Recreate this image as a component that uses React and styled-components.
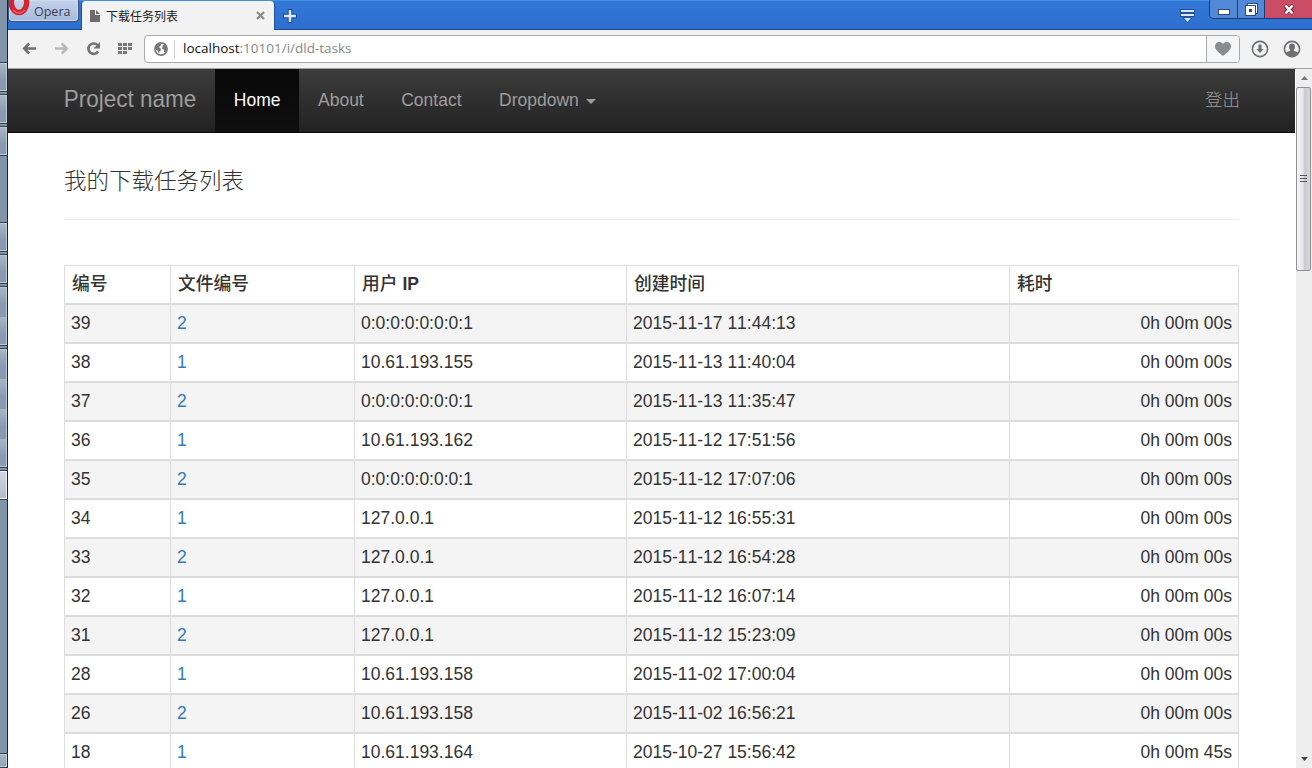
import React from "react";
import styled, { createGlobalStyle, css } from "styled-components";

const Global = createGlobalStyle`
  * { box-sizing: border-box; }
  body { margin: 0; background: #fff; overflow: hidden; font-family: "Liberation Sans", "Noto Sans CJK SC", sans-serif; font-size: 17.5px; color: #333; font-kerning: none; }
`;

const Desktop = styled.div`
  display: flex;
  width: 1312px;
  height: 768px;
  overflow: hidden;
`;
const Strip = styled.div`
  flex: none;
  width: 8px;
  background: #8294aa;
  border-right: 1px solid #20242a;
  display: flex;
  flex-direction: column;
`;
const TaskSlot = styled.div`
  flex: none;
  height: ${(p) => p.$h}px;
  ${(p) =>
    p.$kind === "button" &&
    css`
      background: linear-gradient(#a9b6c5, #8899b0 60%) 0 0 / 100% 30px;
      border: solid #36424f;
      border-width: 1px 0;
      box-shadow: inset -1px 1px #bdc9d5, inset 0 -1px #bdc9d5;
    `}
  ${(p) =>
    p.$kind === "active" &&
    css`
      background: linear-gradient(#d3d8df, #b2bdca);
      border: solid #36424f;
      border-width: 1px 0;
      box-shadow: inset -1px 1px #eef1f4, inset 0 -1px #eef1f4;
    `}
`;
const Browser = styled.div`
  flex: 1;
  min-width: 0;
  display: flex;
  flex-direction: column;
`;
const TabBar = styled.div`
  flex: none;
  height: 30px;
  display: flex;
  background: linear-gradient(#3276d6, #2c6fcf);
  border-top: 1px solid #3f92e0;
  box-shadow: inset 0 -1px #1d4b92;
`;
const OperaButton = styled.div`
  width: 71px;
  height: 22px;
  margin-top: -1px;
  display: flex;
  background: linear-gradient(#c5d3ec, #a7b9db);
  border: 1px solid #38527e;
  border-top: 0;
  border-radius: 0 0 4px 4px;
  box-shadow: inset 0 0 0 1px #cedbef;
  font: 12.5px/23px "Open Sans", sans-serif;
  color: #39424f;
  overflow: hidden;
`;
const OperaMark = styled.svg`
  width: 25px;
  height: 20px;
  flex: none;
`;
const Tab = styled.div`
  width: 194px;
  margin-left: 2px;
  padding: 0 9px 0 8px;
  display: flex;
  align-items: center;
  gap: 6px;
  background: #f2f2f2;
  border: 1px solid #1f5099;
  border-width: 0 1px;
  border-radius: 4px 4px 0 0;
  font: 12px/28px "Noto Sans CJK SC", sans-serif;
  color: #222;
`;
const TabTitle = styled.span`
  flex: 1;
`;
const Icon = styled.svg`
  display: block;
  flex: none;
`;
const NewTab = styled.div`
  padding: 8px 0 0 8px;
  flex: 1;
`;
const TabMenu = styled.div`
  padding: 8px 14px 0 0;
`;
const WindowButtons = styled.div`
  display: flex;
  height: 19px;
  margin-top: -1px;
  border: 1px solid #1d3b70;
  border-width: 0 0 1px 1px;
  border-radius: 0 0 0 5px;
  overflow: hidden;
`;
const WindowButton = styled.div`
  width: ${(p) => p.$w}px;
  padding-top: ${(p) => p.$drop || 0}px;
  display: flex;
  align-items: center;
  justify-content: center;
  background: ${(p) => (p.$close ? "#cb4c65" : "#5388d6")};
  border-left: ${(p) => (p.$first ? 0 : 1)}px solid #1d3b70;
`;
const Toolbar = styled.div`
  flex: none;
  height: 39px;
  display: flex;
  align-items: center;
  padding: 0 11px 1px 14px;
  background: #f2f2f2;
  border-bottom: 1px solid #a3a3a3;
`;
const NavIcons = styled.div`
  display: flex;
  align-items: center;
  width: 122px;
  gap: 17px;
`;
const Address = styled.div`
  flex: 1;
  height: 28px;
  display: flex;
  align-items: center;
  background: #fff;
  border: 1px solid #aaa;
  border-radius: 4px;
  padding-left: 9px;
  overflow: hidden;
`;
const Url = styled.div`
  flex: 1;
  height: 18px;
  margin-left: 6px;
  padding-left: 8px;
  border-left: 1px solid #ccc;
  font: 13.5px/17px "Open Sans", sans-serif;
  color: #888;
`;
const Host = styled.span`
  color: #111;
`;
const HeartButton = styled.div`
  width: 33px;
  height: 26px;
  display: flex;
  align-items: center;
  justify-content: center;
  background: #f5f6f8;
  border-left: 1px solid #aaa;
`;
const ToolIcons = styled.div`
  display: flex;
  gap: 14px;
  margin-left: 11px;
`;
const Viewport = styled.div`
  flex: 1;
  min-height: 0;
  display: flex;
`;
const Page = styled.div`
  flex: 1;
  min-width: 0;
  overflow: hidden;
`;
const Navbar = styled.nav`
  height: 64px;
  display: flex;
  padding: 0 55px 0 37px;
  background: linear-gradient(#3c3c3c, #222);
  border-bottom: 1px solid #080808;
  color: #9d9d9d;
`;
const Brand = styled.div`
  padding: 0 18.75px;
  font-size: 22.5px;
  line-height: 62px;
  transform: scaleY(1.04);
`;
const NavItem = styled.div`
  padding: 0 18.75px;
  line-height: 62px;
  ${(p) =>
    p.$active &&
    css`
      color: #fff;
      background: linear-gradient(#080808, #0f0f0f);
    `}
`;
const Caret = styled.span`
  display: inline-block;
  margin-left: 7px;
  vertical-align: middle;
  border: 5px solid transparent;
  border-top-color: currentColor;
  border-bottom: 0;
`;
const Logout = styled.div`
  margin-left: auto;
  font-weight: 300;
  line-height: 62px;
`;
const Content = styled.main`
  padding: 0 56px;
`;
const Heading = styled.h1`
  margin: 0 0 45px;
  padding-top: 32px;
  height: 87px;
  border-bottom: 1px solid #eee;
  font-size: 22.5px;
  line-height: 34px;
  font-weight: 300;
`;
const Table = styled.div`
  border: 1px solid #ddd;
  border-bottom: 0;
`;
const Row = styled.div`
  display: grid;
  grid-template-columns: 106px 184px 272px 383px 1fr;
  height: 39px;
  line-height: 36px;
  border-bottom: 2px solid #ddd;
  background: ${(p) => (p.$odd ? "#f4f4f4" : "#fff")};
`;
const Cell = styled.div`
  padding: 0 6px;
  border-right: 1px solid #ddd;
  text-align: ${(p) => (p.$right ? "right" : "left")};
  color: ${(p) => (p.$link ? "#337ab7" : "inherit")};
  &:last-child { border-right: 0; }
`;
const HeadCell = styled(Cell)`
  padding-left: 7px;
  font-size: 17.75px;
  font-weight: 500;
`;
const Latin = styled.b`
  font-size: 17.5px;
  font-weight: 700;
`;
const Scrollbar = styled.div`
  flex: none;
  width: 17px;
  display: flex;
  flex-direction: column;
  background: #eee;
  border-left: 1px solid #fff;
`;
const ScrollArrow = styled.div`
  height: 18px;
  display: flex;
  align-items: center;
  justify-content: center;
`;
const Thumb = styled.div`
  width: 15px;
  height: 184px;
  display: flex;
  align-items: center;
  justify-content: center;
  border: 1px solid #929292;
  border-radius: 2px;
  background: linear-gradient(90deg, #f4f4f4, #e8e8ea 45%, #c9c9cd 60%, #d9d9dc);
`;
const Space = styled.div`
  flex: 1;
`;

const slots = [
  [62], [30, "button"], [2], [30, "button"], [2], [30, "button"], [66],
  [30, "button"], [2], [30, "button"], [2], [60, "button"], [2], [120, "button"],
  [2], [30, "active"], [253], [15, "button"],
];

const rows = [
  [39, 2, "0:0:0:0:0:0:0:1", "2015-11-17 11:44:13", "0h 00m 00s"],
  [38, 1, "10.61.193.155", "2015-11-13 11:40:04", "0h 00m 00s"],
  [37, 2, "0:0:0:0:0:0:0:1", "2015-11-13 11:35:47", "0h 00m 00s"],
  [36, 1, "10.61.193.162", "2015-11-12 17:51:56", "0h 00m 00s"],
  [35, 2, "0:0:0:0:0:0:0:1", "2015-11-12 17:07:06", "0h 00m 00s"],
  [34, 1, "127.0.0.1", "2015-11-12 16:55:31", "0h 00m 00s"],
  [33, 2, "127.0.0.1", "2015-11-12 16:54:28", "0h 00m 00s"],
  [32, 1, "127.0.0.1", "2015-11-12 16:07:14", "0h 00m 00s"],
  [31, 2, "127.0.0.1", "2015-11-12 15:23:09", "0h 00m 00s"],
  [28, 1, "10.61.193.158", "2015-11-02 17:00:04", "0h 00m 00s"],
  [26, 2, "10.61.193.158", "2015-11-02 16:56:21", "0h 00m 00s"],
  [18, 1, "10.61.193.164", "2015-10-27 15:56:42", "0h 00m 45s"],
];

function ArrowIcon({ color, flip }) {
  return (
    <Icon width="15" height="13" viewBox="0 0 15 13">
      <path transform={flip ? "translate(15 0) scale(-1 1)" : undefined} d="M7.2 1.5 2.2 6.5 7.2 11.5M2.5 6.5H14" fill="none" stroke={color} strokeWidth="2.500" />
    </Icon>
  );
}

export default function App() {
  return (
    <>
      <Global />
      <Desktop>
        <Strip>
          {slots.map(([h, kind], i) => <TaskSlot key={i} $h={h} $kind={kind} />)}
        </Strip>
        <Browser>
          <TabBar>
            <OperaButton>
              <OperaMark viewBox="0 0 25 20">
                <ellipse cx="10" cy="2.500" rx="7.700" ry="10" fill="none" stroke="#d42532" strokeWidth="5.500" />
                <path d="M4 10q6 6 12 0" fill="none" stroke="#f0636a" strokeWidth="1.500" />
              </OperaMark>
              Opera
            </OperaButton>
            <Tab>
              <Icon width="10" height="12" viewBox="0 0 10 12"><path d="M0 0h5v5h5v7H0zM6 0l4 4H6z" fill="#6c6c6c" /></Icon>
              <TabTitle>下载任务列表</TabTitle>
              <Icon width="9" height="9" viewBox="0 0 9 9"><path d="m1 1 7 7m0-7-7 7" stroke="#888" strokeWidth="2.2" /></Icon>
            </Tab>
            <NewTab>
              <Icon width="14" height="14" viewBox="0 0 14 14">
                <path d="M7 0v14M0 7h14" stroke="#1d4a94" strokeWidth="4.500" />
                <path d="M7 1v12M1 7h12" stroke="#dce9fb" strokeWidth="2.500" />
              </Icon>
            </NewTab>
            <TabMenu>
              <Icon width="15" height="14" viewBox="0 0 15 14">
                <path d="M0 0h15v4H0zM0 4h15v4H0zM2 8h11l-5.500 6z" fill="#1f54a3" />
                <path d="M1 1h13v2H1zM1 5h13v2H1zM4 9h7l-3.500 4z" fill="#dce9fb" />
              </Icon>
            </TabMenu>
            <WindowButtons>
              <WindowButton $w={27} $first $drop={5}>
                <Icon width="14" height="6" viewBox="0 0 14 6"><rect x="1.500" y=".5" width="11" height="5" fill="#fff" stroke="#28487e" /></Icon>
              </WindowButton>
              <WindowButton $w={27}>
                <Icon width="13" height="13" viewBox="0 0 13 13">
                  <path d="M2 0h11v11h-2v2H0V2h2z" fill="#28487e" />
                  <path d="M3 1h9v9h-1V2H3zM1 3h9v9H1zm3 3v3h3V6z" fill="#fff" fillRule="evenodd" />
                </Icon>
              </WindowButton>
              <WindowButton $w={48} $close>
                <Icon width="12" height="11" viewBox="0 0 12 11">
                  <path d="m2 1.500 8 8m0-8-8 8" stroke="#6b2639" strokeWidth="4" />
                  <path d="m2.500 1.500 7 8m0-8-7 8" stroke="#fff" strokeWidth="2.600" />
                </Icon>
              </WindowButton>
            </WindowButtons>
          </TabBar>
          <Toolbar>
            <NavIcons>
              <ArrowIcon color="#6f7173" />
              <ArrowIcon color="#b9b9b9" flip />
              <Icon width="15" height="14" viewBox="0 0 15 14">
                <path d="M11.500 3.200A5.200 5.200 0 1 0 12 9.500" fill="none" stroke="#707274" strokeWidth="2.600" />
                <path d="M14 0v6.500H7.500z" fill="#707274" />
              </Icon>
              <Icon width="15" height="12" viewBox="0 0 15 12">
                <path d="M0 0h4v3H0zM5 0h4v3H5zM10 0h4v3h-4zM0 4h4v3H0zM5 4h4v3H5zM10 4h4v3h-4zM0 8h4v3H0zM5 8h4v3H5z" fill="#777" />
              </Icon>
            </NavIcons>
            <Address>
              <Icon width="14" height="14" viewBox="0 0 14 14">
                <circle cx="7" cy="7" r="6.100" fill="#fff" stroke="#777" strokeWidth="1.600" />
                <path d="M1.500 4.500 4 1.800l3.200.2L6.500 4 4.800 5l1.700 1.500.5 1.700-1.500 1.300L5 12 3.800 9 1.500 7zM8.500 3.500l2-.8 2 2.300.3 3-1.600 2.500-1-.5-.3-2.300-1.700-.9z" fill="#777" />
              </Icon>
              <Url><Host>localhost</Host>:10101/i/dld-tasks</Url>
              <HeartButton>
                <Icon width="16" height="14" viewBox="0 0 16 14"><path d="M8 14C4 10.500 0 8 0 4.200 0 0 5.500-1.400 8 2c2.500-3.400 8-2 8 2.200C16 8 12 10.500 8 14z" fill="#8b8b8b" /></Icon>
              </HeartButton>
            </Address>
            <ToolIcons>
              <Icon width="18" height="18" viewBox="0 0 18 18">
                <circle cx="9" cy="9" r="7.600" fill="none" stroke="#6d6f71" strokeWidth="1.600" />
                <path d="M7.500 4.500h3V9h2L9 13 5.500 9h2z" fill="#6d6f71" />
              </Icon>
              <Icon width="18" height="18" viewBox="0 0 18 18">
                <circle cx="9" cy="9" r="7.600" fill="none" stroke="#6d6f71" strokeWidth="1.600" />
                <path d="M9 3.500c2.200 0 3 1.500 3 3.500 0 1.500-.700 2.500-1.300 3.200.2 1 2.300 1.100 4.300 2.300C13.500 15 11.500 16.500 9 16.500S4.500 15 3 12.500c2-1.200 4.100-1.300 4.300-2.300C6.700 9.500 6 8.500 6 7c0-2 .8-3.500 3-3.500z" fill="#6d6f71" />
              </Icon>
            </ToolIcons>
          </Toolbar>
          <Viewport>
            <Page>
              <Navbar>
                <Brand>Project name</Brand>
                <NavItem $active>Home</NavItem>
                <NavItem>About</NavItem>
                <NavItem>Contact</NavItem>
                <NavItem>Dropdown<Caret /></NavItem>
                <Logout>登出</Logout>
              </Navbar>
              <Content>
                <Heading>我的下载任务列表</Heading>
                <Table>
                  <Row>
                    <HeadCell>编号</HeadCell>
                    <HeadCell>文件编号</HeadCell>
                    <HeadCell>用户 <Latin>IP</Latin></HeadCell>
                    <HeadCell>创建时间</HeadCell>
                    <HeadCell>耗时</HeadCell>
                  </Row>
                  {rows.map((r, i) => (
                    <Row key={r[0]} $odd={i % 2 === 0}>
                      {r.map((v, j) => <Cell key={j} $link={j === 1} $right={j === 4}>{v}</Cell>)}
                    </Row>
                  ))}
                </Table>
              </Content>
            </Page>
            <Scrollbar>
              <ScrollArrow><Icon width="7" height="4" viewBox="0 0 7 4"><path d="M0 4 3.500 0 7 4z" fill="#777" /></Icon></ScrollArrow>
              <Thumb>
                <Icon width="7" height="8" viewBox="0 0 7 8"><path d="M0 .500h7M0 3.500h7M0 6.500h7" stroke="#555" /></Icon>
              </Thumb>
              <Space />
              <ScrollArrow><Icon width="7" height="4" viewBox="0 0 7 4"><path d="M0 0h7L3.500 4z" fill="#444" /></Icon></ScrollArrow>
            </Scrollbar>
          </Viewport>
        </Browser>
      </Desktop>
    </>
  );
}
